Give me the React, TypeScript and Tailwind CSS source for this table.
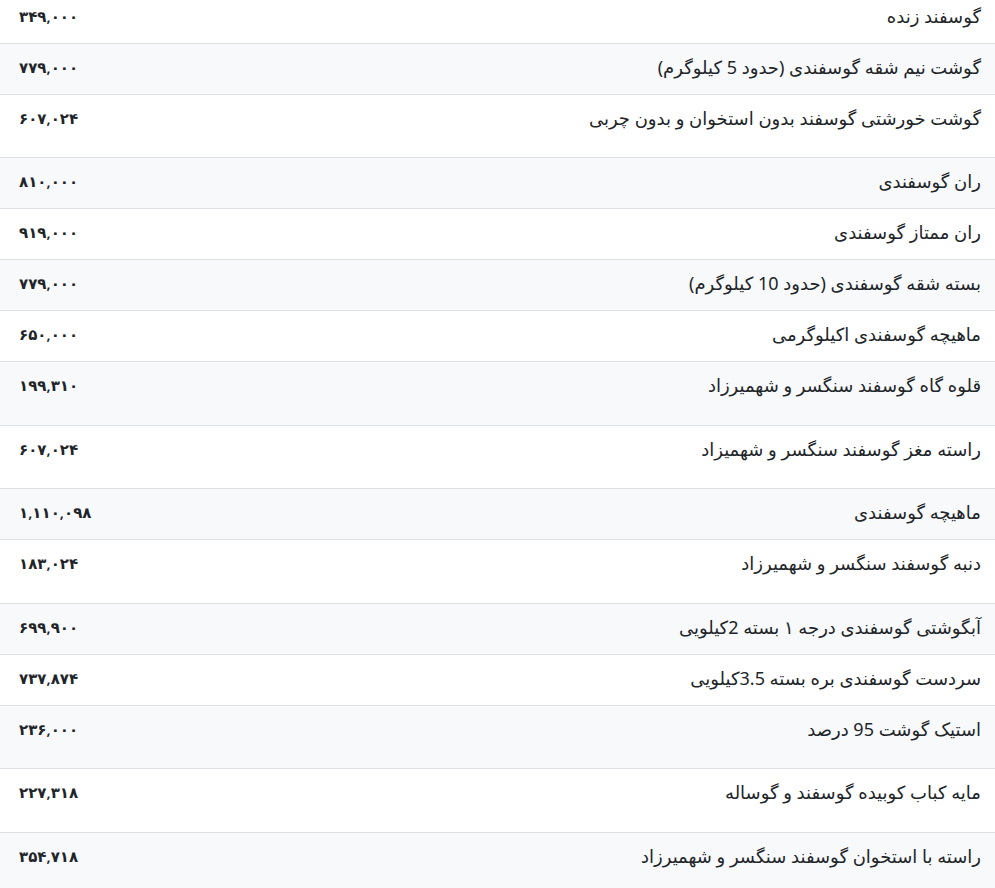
import React from 'react'

const rows = [
  { name: 'گوسفند زنده', price: '۳۴۹,۰۰۰', h: 'h-[51px]' },
  { name: 'گوشت نیم شقه گوسفندی (حدود 5 کیلوگرم)', price: '۷۷۹,۰۰۰', h: 'h-[51px]' },
  { name: 'گوشت خورشتی گوسفند بدون استخوان و بدون چربی', price: '۶۰۷,۰۲۴', h: 'h-[63px]' },
  { name: 'ران گوسفندی', price: '۸۱۰,۰۰۰', h: 'h-[51px]' },
  { name: 'ران ممتاز گوسفندی', price: '۹۱۹,۰۰۰', h: 'h-[51px]' },
  { name: 'بسته شقه گوسفندی (حدود 10 کیلوگرم)', price: '۷۷۹,۰۰۰', h: 'h-[51px]' },
  { name: 'ماهیچه گوسفندی اکیلوگرمی', price: '۶۵۰,۰۰۰', h: 'h-[51px]' },
  { name: 'قلوه گاه گوسفند سنگسر و شهمیرزاد', price: '۱۹۹,۳۱۰', h: 'h-[64px]' },
  { name: 'راسته مغز گوسفند سنگسر و شهمیزاد', price: '۶۰۷,۰۲۴', h: 'h-[63px]' },
  { name: 'ماهیچه گوسفندی', price: '۱,۱۱۰,۰۹۸', h: 'h-[51px]' },
  { name: 'دنبه گوسفند سنگسر و شهمیرزاد', price: '۱۸۳,۰۲۴', h: 'h-[64px]' },
  { name: 'آبگوشتی گوسفندی درجه ۱ بسته 2کیلویی', price: '۶۹۹,۹۰۰', h: 'h-[51px]' },
  { name: 'سردست گوسفندی بره بسته 3.5کیلویی', price: '۷۳۷,۸۷۴', h: 'h-[51px]' },
  { name: 'استیک گوشت 95 درصد', price: '۲۳۶,۰۰۰', h: 'h-[63px]' },
  { name: 'مایه کباب کوبیده گوسفند و گوساله', price: '۲۲۷,۳۱۸', h: 'h-[64px]' },
  { name: 'راسته با استخوان گوسفند سنگسر و شهمیرزاد', price: '۳۵۴,۷۱۸', h: 'h-[64px]' },
]

export default function App() {
  return (
    <div
      dir="rtl"
      className="bg-white text-[#212529] overflow-hidden h-[888px]"
      style={{ fontFamily: '"Noto Sans", "DejaVu Sans", sans-serif' }}
    >
      <table className="w-full border-collapse mt-[-8px] leading-[27px]">
        <tbody>
          {rows.map((row, i) => (
            <tr key={i} className={`${i % 2 === 1 ? 'bg-[#f8f9fa]' : 'bg-white'} ${row.h}`}>
              <td className="border-t border-[#dee2e6] align-top text-right text-[18px] pr-[14px] pl-3 pt-[10px]">
                {row.name}
              </td>
              <td className="border-t border-[#dee2e6] align-top text-left text-[15px] pl-[19px] pr-3 pt-[10px] w-[300px]">
                <span className="font-semibold">{row.price}</span>
              </td>
            </tr>
          ))}
        </tbody>
      </table>
    </div>
  )
}
